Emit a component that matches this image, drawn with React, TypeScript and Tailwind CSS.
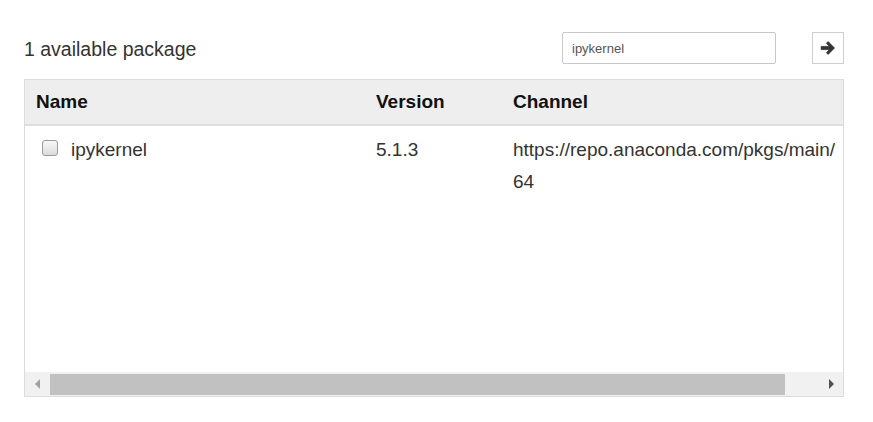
import React from "react";

export default function App() {
  return (
    <div className="w-[873px] h-[422px] bg-white text-[#333] font-['Liberation_Sans',Arial,sans-serif] overflow-hidden">
      <div className="ml-[24px] pt-[32px] w-[820px]">
        <div className="flex items-center h-[32px]">
          <span className="text-[19.5px] leading-none mt-[4px]">1 available package</span>
          <div className="ml-auto flex items-start gap-[36px] h-[32px]">
            <div className="w-[214px] h-[32px] border border-[#c8c8c8] rounded-[2px] flex items-center pl-[9px] pt-[2px] text-[13px] text-[#555]">
              ipykernel
            </div>
            <div className="w-[32px] h-[32px] border border-[#cfcfcf] flex items-center justify-center bg-white">
              <svg width="16" height="16" viewBox="0 0 14 14">
                <path
                  d="M1 5.6h7.3L5.6 2.9 7.1 1.4 12.7 7l-5.6 5.6-1.5-1.5 2.7-2.7H1z"
                  fill="#333"
                  stroke="#333"
                  strokeWidth="0.7"
                  strokeLinejoin="round"
                />
              </svg>
            </div>
          </div>
        </div>

        <div className="mt-[15px] h-[318px] border border-[#dcdcdc] flex flex-col overflow-hidden">
          <div className="h-[46px] shrink-0 bg-[#eeeeee] border-b-[2px] border-[#dedede] grid grid-cols-[351px_137px_1fr] items-center text-[19px] font-bold text-[#111]">
            <div className="pl-[11px]">Name</div>
            <div>Version</div>
            <div>Channel</div>
          </div>
          <div className="flex-1 pt-[8px] overflow-hidden">
            <div className="grid grid-cols-[351px_137px_1fr] text-[19px] leading-[32px] text-[#333]">
              <div className="pl-[17px] flex items-start">
                <div className="mt-[6px] w-[16px] h-[16px] rounded-[3px] border border-[#9b9b9b] bg-gradient-to-b from-[#f7f7f7] to-[#dcdcdc] shrink-0" />
                <span className="ml-[13px]">ipykernel</span>
              </div>
              <div>5.1.3</div>
              <div className="whitespace-nowrap">
                <div>https://repo.anaconda.com/pkgs/main/</div>
                <div>64</div>
              </div>
            </div>
          </div>
          <div className="h-[24px] shrink-0 bg-[#f1f1f1] flex items-stretch">
            <div className="w-[25px] flex items-center justify-center">
              <svg width="6" height="10" viewBox="0 0 6 10">
                <path d="M5 0v10L0 5z" fill="#a3a3a3" />
              </svg>
            </div>
            <div className="flex-1 pt-[2px] pb-[1px] flex">
              <div className="w-[735px] bg-[#c1c1c1]" />
            </div>
            <div className="w-[25px] flex items-center justify-center">
              <svg width="6" height="10" viewBox="0 0 6 10">
                <path d="M1 0v10l5-5z" fill="#505050" />
              </svg>
            </div>
          </div>
        </div>
      </div>
    </div>
  );
}
